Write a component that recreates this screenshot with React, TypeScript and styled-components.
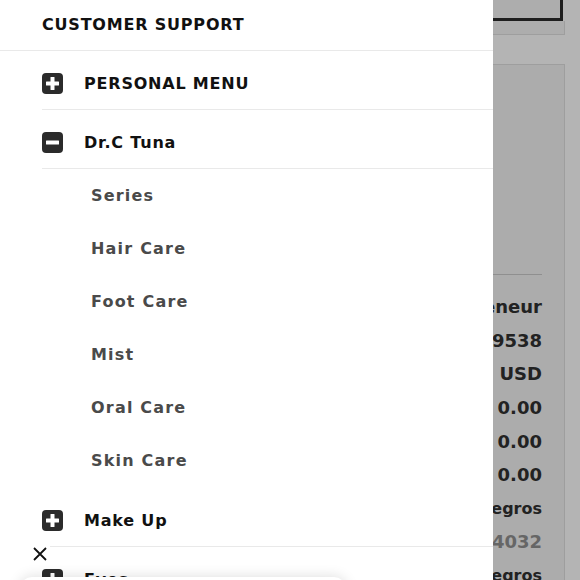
import styled, { createGlobalStyle } from "styled-components";

const GlobalStyle = createGlobalStyle`
	html, body {
		margin: 0;
		padding: 0;
		width: 580px;
		height: 580px;
		overflow: hidden;
		background: #b4b4b4;
	}
	* {
		box-sizing: border-box;
	}
`;

type MenuEntry = {
	label: string;
	open?: boolean;
	children?: string[];
};

const MENU: MenuEntry[] = [
	{ label: "PERSONAL MENU" },
	{
		label: "Dr.C Tuna",
		open: true,
		children: ["Series", "Hair Care", "Foot Care", "Mist", "Oral Care", "Skin Care"],
	},
	{ label: "Make Up" },
	{ label: "Eyes" },
];

const SUMMARY = [
	{ text: "Entrepreneur", size: 18, tone: "dark" },
	{ text: "0919538", size: 18, tone: "dark" },
	{ text: "USD", size: 18, tone: "dark" },
	{ text: "0.00", size: 18, tone: "dark" },
	{ text: "0.00", size: 18, tone: "dark" },
	{ text: "0.00", size: 18, tone: "dark" },
	{ text: "Negros", size: 16, tone: "dark" },
	{ text: "6104032", size: 18, tone: "muted" },
	{ text: "Negros", size: 16, tone: "dark" },
];

const ToggleIcon: React.FC<{ open?: boolean }> = ({ open }) => (
	<svg width="21" height="21" viewBox="0 0 21 21">
		<rect x="0" y="0" width="21" height="21" rx="4" fill="#2b2b2b" />
		<rect x="4" y="8.5" width="13" height="4" rx="0.5" fill="#fff" />
		{!open && <rect x="8.5" y="4" width="4" height="13" rx="0.5" fill="#fff" />}
	</svg>
);

const App: React.FC = () => {
	return (
		<>
			<GlobalStyle />
			<Page>
				<TopBox />
				<TopStrip />
				<Panel>
					<PanelRule />
					{SUMMARY.map((row, index) => (
						<SummaryRow key={index} size={row.size} muted={row.tone === "muted"}>
							{row.text}
						</SummaryRow>
					))}
				</Panel>
			</Page>
			<Drawer>
				<DrawerTitle>CUSTOMER SUPPORT</DrawerTitle>
				<MenuList>
					{MENU.map((entry) => (
						<li key={entry.label}>
							<MenuRow>
								<ToggleIcon open={entry.open} />
								<MenuLabel>{entry.label}</MenuLabel>
							</MenuRow>
							{entry.open && entry.children && (
								<SubList>
									{entry.children.map((child) => (
										<SubItem key={child}>{child}</SubItem>
									))}
								</SubList>
							)}
						</li>
					))}
				</MenuList>
				<CloseButton aria-label="Close">
					<svg width="16" height="16" viewBox="0 0 16 16">
						<path d="M2 2 L14 14 M14 2 L2 14" stroke="#111" strokeWidth="1.8" />
					</svg>
				</CloseButton>
			</Drawer>
			<CardDock>
				<FloatingCard />
			</CardDock>
		</>
	);
};
export default App;

const Page = styled.div`
	height: 580px;
	padding-right: 15px;
	display: flex;
	flex-direction: column;
	overflow: hidden;
	font-family: "DejaVu Sans", sans-serif;
`;
const TopBox = styled.div`
	height: 21px;
	flex-shrink: 0;
	margin-right: 2px;
	border-right: 3px solid #1e1e1e;
	border-bottom: 3px solid #1e1e1e;
	background: #adadad;
`;
const TopStrip = styled.div`
	height: 14px;
	flex-shrink: 0;
	border-right: 1px solid #9e9e9e;
	border-bottom: 1px solid #9e9e9e;
	background: #adadad;
`;
const Panel = styled.div`
	flex: 1;
	min-height: 0;
	margin-top: 29px;
	padding: 0 22px 0 0;
	border-top: 1px solid #9e9e9e;
	border-right: 1px solid #9e9e9e;
	background: #acacac;
	display: flex;
	flex-direction: column;
	align-items: flex-end;
	overflow: hidden;
`;
const PanelRule = styled.div`
	width: 100%;
	height: 1px;
	flex-shrink: 0;
	margin-top: 209px;
	margin-bottom: 15px;
	background: #8f8f8f;
`;
const SummaryRow = styled.div<{ size: number; muted?: boolean }>`
	height: 33.6px;
	flex-shrink: 0;
	display: flex;
	align-items: center;
	white-space: nowrap;
	font-size: ${(props) => props.size}px;
	font-weight: 700;
	color: ${(props) => (props.muted ? "#666" : "#222")};
`;

const Drawer = styled.aside`
	position: absolute;
	top: 0;
	left: 0;
	width: 493px;
	height: 580px;
	background: #fff;
	overflow: hidden;
	font-family: "DejaVu Sans", sans-serif;
`;
const DrawerTitle = styled.div`
	height: 51px;
	padding: 0 0 2px 42px;
	display: flex;
	align-items: center;
	border-bottom: 1px solid #e9e9e9;
	font-size: 16px;
	font-weight: 700;
	letter-spacing: 0.8px;
	color: #111;
`;
const MenuList = styled.ul`
	list-style: none;
	margin: 0 0 0 42px;
	padding: 0;
`;
const MenuRow = styled.div`
	height: 59px;
	padding-top: 7px;
	display: flex;
	align-items: center;
	gap: 21px;
	border-bottom: 1px solid #e9e9e9;
`;
const MenuLabel = styled.span`
	font-size: 16px;
	font-weight: 700;
	letter-spacing: 0.8px;
	color: #111;
`;
const SubList = styled.ul`
	list-style: none;
	margin: 0;
	padding: 0 0 1px 49px;
`;
const SubItem = styled.li`
	height: 53px;
	display: flex;
	align-items: center;
	font-size: 16px;
	font-weight: 700;
	letter-spacing: 1.2px;
	color: #4a4a4a;
`;
const CloseButton = styled.button`
	position: absolute;
	left: 30px;
	top: 544px;
	width: 20px;
	height: 20px;
	padding: 0;
	border: none;
	background: #fff;
	display: flex;
	align-items: center;
	justify-content: center;
`;
const CardDock = styled.div`
	position: absolute;
	left: 0;
	top: 555px;
	width: 380px;
	height: 25px;
	overflow: hidden;
`;
const FloatingCard = styled.div`
	margin: 22px 0 0 20px;
	width: 326px;
	height: 40px;
	border-radius: 12px;
	background: #fff;
	box-shadow: 0 0 14px rgba(0, 0, 0, 0.14);
`;
